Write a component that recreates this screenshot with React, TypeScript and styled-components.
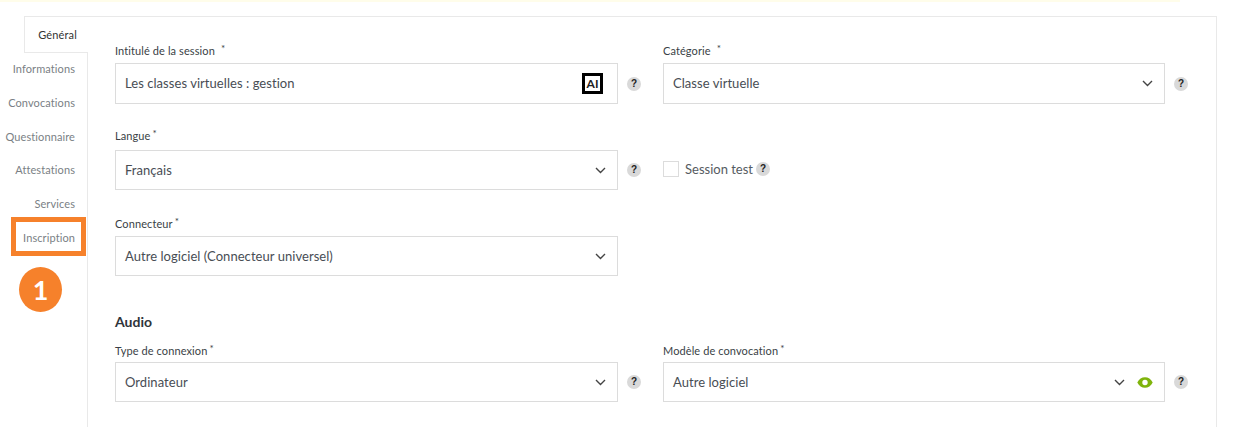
import React from 'react';
import styled, {createGlobalStyle} from 'styled-components';

const line = '#e9e9e9';
const fieldLine = '#dcdcdc';
const orange = '#f6812b';

const GlobalStyle = createGlobalStyle`
  html, body {
    margin: 0;
    background: #fff;
  }
  body {
    font-family: Lato, "Open Sans", sans-serif;
    color: #3f4650;
  }
`;

const tabs = ['Informations', 'Convocations', 'Questionnaire', 'Attestations', 'Services', 'Inscription'];

const Chevron = () => (
  <svg width="11" height="7" viewBox="0 0 11 7" fill="none">
    <path d="M1 1l4.5 4.5L10 1" stroke="#444" strokeWidth="1.4" />
  </svg>
);

const Eye = () => (
  <svg width="16" height="11" viewBox="0 0 16 11">
    <path
      fillRule="evenodd"
      fill="#7fb40c"
      d="M0.3 5.5C2 2 4.8 0.3 8 0.3s6 1.7 7.7 5.2C14 9 11.2 10.7 8 10.7S2 9 0.3 5.5zM8 2.8a2.7 2.7 0 1 0 0 5.4 2.7 2.7 0 0 0 0-5.4z"
    />
  </svg>
);

const Help = () => <HelpDot>?</HelpDot>;

type FieldProps = {
  label: string;
  value: string;
  gap: number;
  width?: number;
  height?: number;
  starOffset?: number;
  children?: React.ReactNode;
  select?: boolean;
  help?: boolean;
};

const Field = ({
  label,
  value,
  gap,
  width = 503,
  height = 40,
  starOffset = 2,
  children,
  select = true,
  help = true,
}: FieldProps) => (
  <div>
    <Label $gap={gap}>
      {label}
      <Star $offset={starOffset}>*</Star>
    </Label>
    <ControlRow>
      <Control $width={width} $height={height}>
        <Value>{value}</Value>
        {select && <Chevron />}
        {children}
      </Control>
      {help && <Help />}
    </ControlRow>
  </div>
);

const App = () => {
  return (
    <>
      <GlobalStyle />
      <Page>
        <TopStrip />
        <Shell>
          <Rail>
            <ActiveTab>Général</ActiveTab>
            <TabList>
              {tabs.map((tab) => (
                <Tab key={tab}>
                  {tab}
                  {tab === 'Inscription' && <Highlight />}
                </Tab>
              ))}
              <StepBadge>1</StepBadge>
            </TabList>
          </Rail>
          <Main>
            <FormGrid $top={27}>
              <Field
                label="Intitulé de la session"
                value="Les classes virtuelles : gestion"
                gap={5}
                height={41}
                starOffset={6}
                select={false}
              >
                <AiBadge>AI</AiBadge>
              </Field>
              <Field label="Catégorie" value="Classe virtuelle" gap={5} width={502} height={41} starOffset={6} />
            </FormGrid>
            <FormGrid $top={25}>
              <Field label="Langue" value="Français" gap={7} />
              <CheckRow>
                <CheckBox />
                <CheckLabel>Session test</CheckLabel>
                <Help />
              </CheckRow>
            </FormGrid>
            <FormGrid $top={27}>
              <Field label="Connecteur" value="Autre logiciel (Connecteur universel)" gap={5} help={false} />
            </FormGrid>
            <SectionTitle>Audio</SectionTitle>
            <FormGrid $top={13}>
              <Field label="Type de connexion" value="Ordinateur" gap={4} />
              <Field label="Modèle de convocation" value="Autre logiciel" gap={4} width={502}>
                <EyeSlot>
                  <Eye />
                </EyeSlot>
              </Field>
            </FormGrid>
          </Main>
        </Shell>
      </Page>
    </>
  );
};

const Page = styled.div`
  width: 1241px;
  height: 427px;
  overflow: hidden;
`;

const TopStrip = styled.div`
  width: 1180px;
  height: 2px;
  background: #fffdea;
`;

const Shell = styled.div`
  display: flex;
  width: 1193px;
  height: 411px;
  margin: 14px 0 0 24px;
  box-sizing: border-box;
  border-top: 1px solid ${line};
  border-right: 1px solid ${line};
`;

const Rail = styled.div`
  display: flex;
  flex-direction: column;
  flex: 0 0 64px;
  min-width: 0;
`;

const ActiveTab = styled.div`
  flex: 0 0 36px;
  box-sizing: border-box;
  padding-right: 11px;
  border-left: 1px solid ${line};
  border-bottom: 1px solid ${line};
  color: #333;
  font-size: 11px;
  letter-spacing: 0.15px;
  line-height: 35px;
  text-align: right;
`;

const TabList = styled.div`
  position: relative;
  flex: 1;
  padding: 0 12px 0 0;
  border-right: 1px solid ${line};
`;

const Tab = styled.div`
  position: relative;
  display: flex;
  justify-content: flex-end;
  height: 33.8px;
  color: #7a7f85;
  font-size: 11px;
  letter-spacing: 0.1px;
  line-height: 32px;
  white-space: nowrap;
`;

const Highlight = styled.span`
  position: absolute;
  top: -5px;
  right: -11px;
  width: 75px;
  height: 39px;
  box-sizing: border-box;
  border: 5px solid ${orange};
`;

const StepBadge = styled.div`
  position: absolute;
  top: 214px;
  left: -5px;
  width: 43px;
  height: 45px;
  border-radius: 50%;
  background: ${orange};
  color: #fff;
  font-size: 27px;
  font-weight: 700;
  line-height: 45px;
  text-align: center;
`;

const Main = styled.div`
  flex: 1;
  min-width: 0;
  padding-left: 27px;
`;

const FormGrid = styled.div<{$top: number}>`
  display: grid;
  grid-template-columns: 548px 502px;
  margin-top: ${({$top}) => $top}px;
`;

const Label = styled.div<{$gap: number}>`
  height: 14px;
  margin-bottom: ${({$gap}) => $gap}px;
  color: #3a3f46;
  font-size: 11px;
  letter-spacing: 0.1px;
  line-height: 14px;
  white-space: nowrap;
`;

const Star = styled.span<{$offset: number}>`
  position: relative;
  top: -3px;
  margin-left: ${({$offset}) => $offset}px;
  font-size: 10px;
`;

const ControlRow = styled.div`
  display: flex;
  align-items: center;
  gap: 9px;
  width: 526px;
`;

const Control = styled.div<{$width: number; $height: number}>`
  display: flex;
  align-items: center;
  flex: 0 0 ${({$width}) => $width}px;
  height: ${({$height}) => $height}px;
  box-sizing: border-box;
  padding: 0 11px 0 9px;
  border: 1px solid ${fieldLine};
  background: #fff;
`;

const Value = styled.div`
  flex: 1;
  margin-top: -1px;
  color: #484d54;
  font-size: 13px;
  letter-spacing: 0.05px;
  white-space: nowrap;
`;

const AiBadge = styled.div`
  width: 21px;
  height: 21px;
  margin-right: 3px;
  box-sizing: border-box;
  border: 3px solid #000;
  color: #222;
  font-size: 12px;
  font-weight: 700;
  line-height: 15px;
  text-align: center;
`;

const EyeSlot = styled.div`
  display: flex;
  margin: 0 0 0 12px;
`;

const HelpDot = styled.span`
  flex: none;
  width: 14px;
  height: 14px;
  border-radius: 50%;
  background: #d9d9d9;
  color: #222;
  font-family: "Liberation Sans", sans-serif;
  font-size: 10px;
  font-weight: 700;
  line-height: 14px;
  text-align: center;
`;

const CheckRow = styled.div`
  display: flex;
  align-items: center;
  height: 40px;
  margin-top: 20px;
`;

const CheckBox = styled.span`
  width: 14px;
  height: 14px;
  margin-right: 6px;
  border: 1px solid ${fieldLine};
`;

const CheckLabel = styled.span`
  margin-right: 3px;
  color: #565b61;
  font-size: 13px;
`;

const SectionTitle = styled.div`
  margin-top: 37px;
  color: #2f343a;
  font-size: 14px;
  font-weight: 700;
  line-height: 18px;
`;

export default App;
